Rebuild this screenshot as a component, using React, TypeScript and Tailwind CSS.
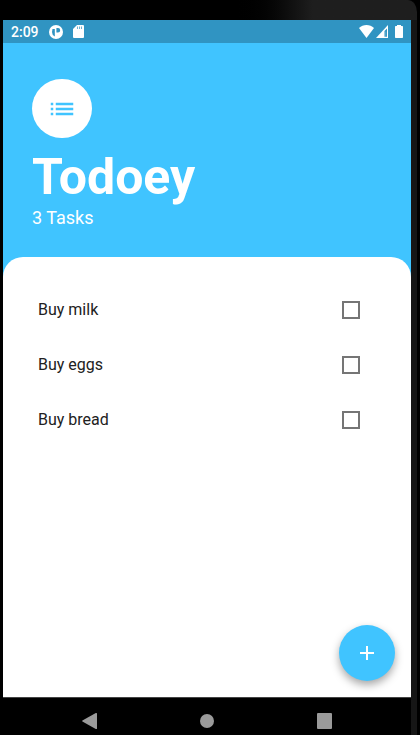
import { useState } from "react";
import { MdAdd, MdList } from "react-icons/md";

const initialTasks = [
  { id: "milk", name: "Buy milk", done: false },
  { id: "eggs", name: "Buy eggs", done: false },
  { id: "bread", name: "Buy bread", done: false },
];

function StatusBar() {
  return (
    <div className="flex h-[23px] shrink-0 items-center justify-between bg-[#3094c2] px-2 text-white">
      <div className="flex items-center">
        <span className="w-[38px] text-sm font-medium leading-none">2:09</span>
        <svg className="h-[14px] w-[14px]" viewBox="0 0 14 14" aria-hidden="true">
          <circle cx="7" cy="7" r="7" fill="#fff" />
          <path d="M3.500 4H5.800V11.500Q3 10 3 7z" fill="#3094c2" />
          <path d="M7.400 3H9a2.200 2.200 0 0 1 0 4.400H7.400z" fill="#3094c2" />
        </svg>
        <svg className="ml-[10px] h-[13px] w-[11px]" viewBox="0 0 11 13" aria-hidden="true">
          <path d="M4 0h6a1 1 0 0 1 1 1v11a1 1 0 0 1-1 1H1a1 1 0 0 1-1-1V4z" fill="#fff" />
          <path d="M4 1.500h1v2.500H4zM6 1.500h1v2.500H6zM8 1.500h1v2.500H8z" fill="#3094c2" opacity=".7" />
        </svg>
      </div>
      <div className="flex items-center">
        <svg className="h-[13px] w-[15px]" viewBox="0 0 15 13" aria-hidden="true">
          <path d="M0 3C4-1 11-1 15 3L7.500 13z" fill="#fff" />
        </svg>
        <svg className="ml-[2px] h-[13px] w-[12px]" viewBox="0 0 12 13" aria-hidden="true">
          <path d="M0 13L12 0v13z" fill="#fff" />
          <path d="M8.500 6L11 3.500v8.300H8.500z" fill="#3094c2" />
          <path d="M9.500 6.500h.7v5h-.7z" fill="#fff" opacity=".35" />
        </svg>
        <svg className="ml-[7px] h-[13px] w-[8px]" viewBox="0 0 8 13" aria-hidden="true">
          <path d="M2 0h4v1h1.300q.7 0 .7.700v10.600q0 .7-.7.700H.7Q0 13 0 12.300V1.700Q0 1 .7 1H2z" fill="#fff" />
        </svg>
      </div>
    </div>
  );
}

function NavigationBar() {
  return (
    <nav className="flex h-[38px] shrink-0 items-center justify-center gap-[103px] border-t border-[#444] bg-black pt-2">
      <button type="button" aria-label="Back">
        <svg className="block h-4 w-[15px]" viewBox="0 0 15 16" aria-hidden="true">
          <path d="M14.500 0q.5 0 .5.600v14.800q0 .6-.5.600h-.7L.4 8.500Q0 8 .4 7.500L13.800 0z" fill="#9a9a9a" />
        </svg>
      </button>
      <button type="button" aria-label="Home" className="h-[14px] w-[14px] rounded-full bg-[#9a9a9a]" />
      <button type="button" aria-label="Recent apps" className="h-4 w-[15px] rounded-[1px] bg-[#9a9a9a]" />
    </nav>
  );
}

export default function App() {
  const [tasks, setTasks] = useState(initialTasks);

  const toggle = (id: string) =>
    setTasks(tasks.map((task) => (task.id === id ? { ...task, done: !task.done } : task)));

  return (
    <div className="flex min-h-screen flex-col bg-black font-['Roboto',sans-serif]">
      <div className="h-5 shrink-0 rounded-tr-xl border-r-3 border-black bg-linear-to-r from-black from-55% to-[#1e1e1e] to-75%" />
      <div className="flex grow pl-[3px]">
        <div className="flex min-w-0 grow flex-col bg-[#40c4ff]">
          <StatusBar />
          <header className="flex flex-col items-start px-[29px] pb-[27px] pt-9 text-white">
            <div className="flex h-[59px] w-[60px] items-center justify-center rounded-full bg-white text-[#40c4ff]">
              <MdList size={30} />
            </div>
            <h1 className="mt-[10px] text-[50px] font-bold leading-[58px]">Todoey</h1>
            <p className="text-lg leading-6">3 Tasks</p>
          </header>
          <main className="relative grow rounded-t-[20px] bg-white px-[35px] pb-24 pt-[25px]">
            <ul>
              {tasks.map((task) => (
                <li key={task.id}>
                  <label className="flex h-[55px] items-center justify-between pr-4 text-base text-[#212121]">
                    {task.name}
                    <input
                      type="checkbox"
                      checked={task.done}
                      onChange={() => toggle(task.id)}
                      className="h-[18px] w-[18px] appearance-none border-2 border-[#757575] checked:border-[#40c4ff] checked:bg-[#40c4ff]"
                    />
                  </label>
                </li>
              ))}
            </ul>
            <button
              type="button"
              aria-label="Add task"
              className="absolute bottom-4 right-4 flex h-14 w-14 items-center justify-center rounded-full bg-[#40c4ff] text-white shadow-[0_4px_8px_rgba(0,0,0,0.35)]"
            >
              <MdAdd size={24} />
            </button>
          </main>
          <NavigationBar />
        </div>
        <div className="w-[9px] shrink-0 border-r-3 border-black bg-[#161616]" />
      </div>
    </div>
  );
}
